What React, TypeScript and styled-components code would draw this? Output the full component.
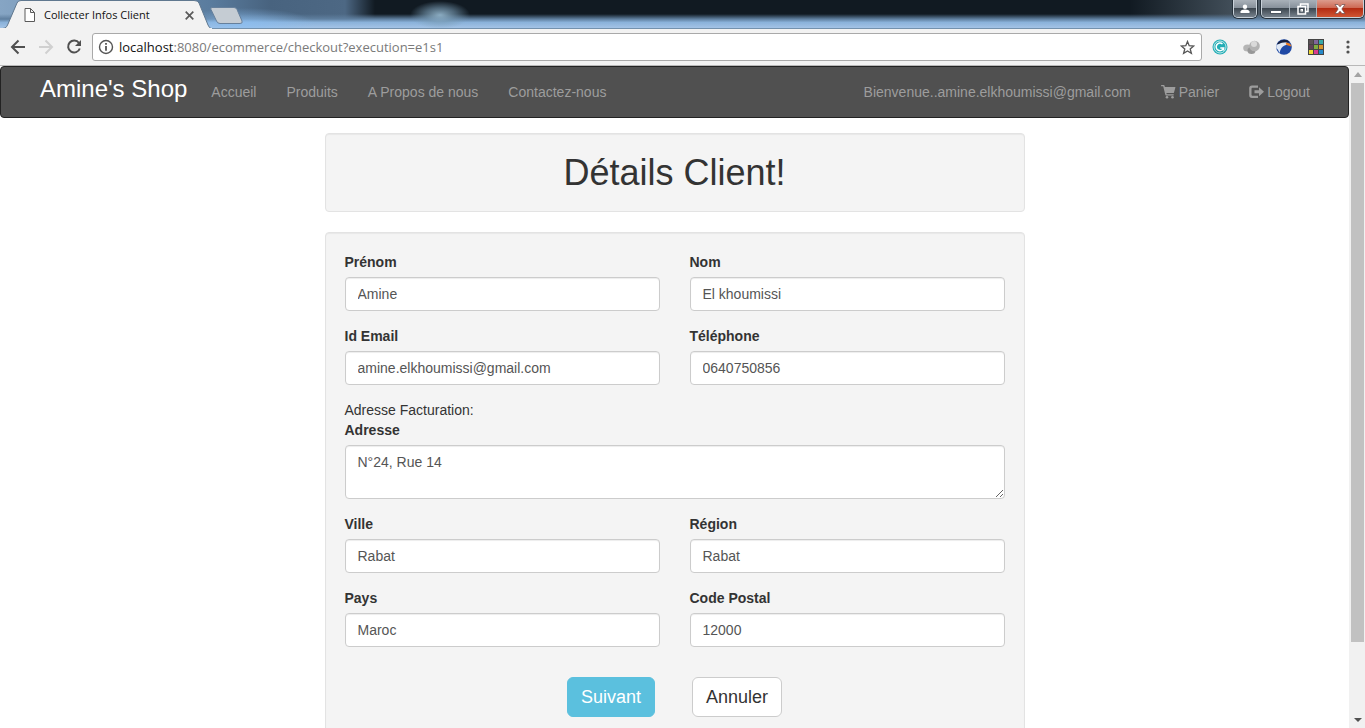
import React from 'react';
import styled, { createGlobalStyle, css } from 'styled-components';

const GlobalStyle = createGlobalStyle`
  * { box-sizing: border-box; }
  html, body { margin: 0; height: 100%; overflow: hidden; }
  body {
    font-family: 'Liberation Sans', Arial, sans-serif;
    font-size: 14px;
    line-height: 20px;
    color: #333;
    background: #fff;
  }
`;

const Window = styled.div`
  display: flex;
  flex-direction: column;
  height: 100vh;
  overflow: hidden;
`;

/* ---------- browser chrome ---------- */

const TitleBar = styled.header`
  display: flex;
  flex: none;
  align-items: flex-start;
  justify-content: space-between;
  height: 29px;
  border-bottom: 1px solid #7391ad;
  background:
    radial-gradient(ellipse 30px 14px at 440px 15px, rgba(150, 185, 208, 0.9) 0%, rgba(120, 155, 180, 0.6) 50%, transparent 100%),
    radial-gradient(ellipse 70px 16px at 245px 24px, rgba(140, 190, 240, 0.8) 0%, transparent 100%),
    linear-gradient(to bottom, transparent 50%, #5f7f9f 68%, #8ab2da 80%, #a3c3e6 100%),
    linear-gradient(to right, #86a5c4 0, #5a7c9e 210px, #48637f 270px, #4d6884 345px, #111a22 375px, #111a22 1130px, #45525d 1240px, #7d8b99 100%);
`;

const TabStrip = styled.div`
  display: flex;
  align-items: flex-start;
`;

const Tab = styled.div`
  position: relative;
  display: flex;
  align-items: center;
  width: 210px;
  height: 29px;
  padding: 1px 16px 0 24px;
  font-family: 'Open Sans', 'Noto Sans', sans-serif;
  font-size: 11px;
  color: #111;
`;

const TabShape = styled.svg`
  position: absolute;
  left: 0;
  top: 0;
`;

const TabTitle = styled.span`
  position: relative;
  flex: 1;
  margin-left: 9px;
  white-space: nowrap;
`;

const PlainButton = styled.button`
  position: relative;
  display: flex;
  align-items: center;
  justify-content: center;
  padding: 0;
  border: 0;
  background: none;
  color: #5a5a5a;
`;

const FileIcon = styled.svg`
  position: relative;
  flex: none;
`;

const NewTab = styled(PlainButton)`
  margin-top: 7px;
`;

const WindowButtons = styled.div`
  display: flex;
  gap: 4px;
  padding-right: 1px;
`;

const ButtonGroup = styled.div`
  display: flex;
  height: 18px;
  border: 1px solid #c9d2da;
  border-top: 0;
  border-radius: 0 0 5px 5px;
  overflow: hidden;
  box-shadow: 0 0 0 1px #27323c;
`;

const WindowButton = styled(PlainButton)<{ $width: number; $close?: boolean }>`
  width: ${(p) => p.$width}px;
  height: 17px;
  border-right: 1px solid #aab4bd;
  background: ${(p) =>
    p.$close
      ? 'linear-gradient(#dc9c8d 0, #ce6a55 45%, #b42c13 50%, #cf5533 100%)'
      : 'linear-gradient(#a9b1b9 0, #87919b 45%, #3d4750 50%, #77828d 100%)'};
  &:last-child { border-right: 0; }
`;

const Toolbar = styled.div`
  display: flex;
  flex: none;
  align-items: center;
  height: 37px;
  padding: 0 7px 0 8px;
  border-bottom: 1px solid #b8b8b8;
  background: #f2f2f2;
`;

const NavButtons = styled.div`
  display: flex;
  gap: 8px;
  margin-right: 8px;
`;

const ToolButton = styled(PlainButton)`
  width: 20px;
  height: 24px;
`;

const AddressBar = styled.div`
  display: flex;
  flex: 1;
  align-items: center;
  height: 28px;
  padding: 0 6px 0 5px;
  border: 1px solid #a9a9a9;
  border-radius: 3px;
  background: #fff;
`;

const Url = styled.div`
  flex: 1;
  margin-left: 5px;
  font-family: 'Open Sans', 'Noto Sans', sans-serif;
  font-size: 13px;
  color: #7a7a7a;
  b { font-weight: 400; color: #111; }
`;

const Extensions = styled.div`
  display: flex;
  gap: 12px;
  margin-left: 8px;
`;

/* ---------- page ---------- */

const Viewport = styled.div`
  display: flex;
  flex: 1;
  min-height: 0;
`;

const Page = styled.div`
  flex: 1;
  min-width: 0;
  overflow: hidden;
`;

const Scrollbar = styled.div`
  display: flex;
  flex: none;
  flex-direction: column;
  align-items: center;
  width: 16px;
  padding: 0 1px 0 2px;
  background: #f1f1f1;
`;

const ScrollArrow = styled(PlainButton)`
  width: 13px;
  height: 17px;
`;

const ScrollTrack = styled.div`
  flex: 1;
  align-self: stretch;
`;

const ScrollThumb = styled.div`
  height: 89%;
  background: #c1c1c1;
`;

const Navbar = styled.nav`
  display: flex;
  align-items: flex-start;
  justify-content: space-between;
  height: 52px;
  margin-bottom: 15px;
  padding: 0 23px 0 39px;
  border: 1px solid #222;
  border-radius: 4px;
  background: #505050;
`;

const NavGroup = styled.div`
  display: flex;
`;

const Brand = styled.a`
  padding: 12px 9px 0 0;
  font-size: 24px;
  color: #fff;
  text-decoration: none;
  white-space: nowrap;
`;

const NavLink = styled.a`
  display: flex;
  align-items: center;
  gap: 3px;
  padding: 15px;
  color: #9d9d9d;
  text-decoration: none;
  white-space: nowrap;
`;

const Column = styled.main`
  max-width: 700px;
  margin: 0 auto;
`;

const Well = styled.section`
  margin-bottom: 20px;
  padding: 19px;
  border: 1px solid #e3e3e3;
  border-radius: 4px;
  background: #f4f4f4;
  box-shadow: inset 0 1px 1px rgba(0, 0, 0, 0.05);
`;

const Heading = styled.h1`
  margin: 0;
  font-size: 36px;
  font-weight: 400;
  line-height: 39px;
  text-align: center;
`;

const FieldGrid = styled.div`
  display: grid;
  grid-template-columns: 1fr 1fr;
  gap: 15px 30px;
`;

const FieldBox = styled.div<{ $wide?: boolean }>`
  display: flex;
  flex-direction: column;
  grid-column: ${(p) => (p.$wide ? '1 / -1' : 'auto')};
`;

const Label = styled.label`
  margin-bottom: 5px;
  font-weight: 700;
`;

const control = css`
  width: 100%;
  padding: 6px 12px;
  border: 1px solid #ccc;
  border-radius: 4px;
  background: #fff;
  box-shadow: inset 0 1px 1px rgba(0, 0, 0, 0.075);
  font: inherit;
  color: #555;
`;

const Input = styled.input`
  ${control}
  height: 34px;
`;

const TextArea = styled.textarea`
  ${control}
  height: 54px;
  resize: vertical;
`;

const Actions = styled.div`
  display: flex;
  justify-content: center;
  gap: 37px;
  padding: 30px 0 15px;
`;

const ActionButton = styled.button<{ $primary?: boolean }>`
  padding: 6px 13px;
  border: 1px solid ${(p) => (p.$primary ? '#5bc0de' : '#ccc')};
  border-radius: 6px;
  background: ${(p) => (p.$primary ? '#5bc0de' : '#fff')};
  color: ${(p) => (p.$primary ? '#fff' : '#333')};
  font-family: inherit;
  font-size: 18px;
  line-height: 26px;
`;

function Field({ id, label, value }: { id: string; label: string; value: string }) {
  return (
    <FieldBox>
      <Label htmlFor={id}>{label}</Label>
      <Input id={id} name={id} defaultValue={value} />
    </FieldBox>
  );
}

function Chrome() {
  return (
    <>
      <TitleBar>
        <TabStrip>
          <Tab>
            <TabShape width="212" height="29" viewBox="0 0 212 29" aria-hidden="true">
              <path d="M0 29 L5 28 Q7 27 8 24 L17 3 Q18 .5 21 .5 H194 Q198 .5 199 3 L208 25 Q209 28 212 29 Z" fill="#f2f2f2" stroke="#60788f" />
              <path d="M0 29 H212" stroke="#f2f2f2" strokeWidth="2" />
            </TabShape>
            <FileIcon width="11" height="14" viewBox="0 0 11 14" fill="#fff" stroke="#5a5a5a" aria-hidden="true">
              <path d="M1 .5 H6.5 L10.5 4.500 V13.500 H1 Z M6.500 .5 V4.500 H10.500" />
            </FileIcon>
            <TabTitle>Collecter Infos Client</TabTitle>
            <PlainButton aria-label="Fermer l'onglet">
              <svg width="9" height="9" viewBox="0 0 9 9" stroke="#5a5a5a" strokeWidth="1.7"><path d="M.7 .7 L8.300 8.300 M8.300 .7 L.7 8.300" /></svg>
            </PlainButton>
          </Tab>
          <NewTab aria-label="Nouvel onglet">
            <svg width="33" height="18" viewBox="0 0 33 18"><path d="M2 .5 H24 Q26 .5 27 2.500 L32 14 Q33 16.500 30 16.500 H10 Q7.500 16.500 6.500 14 L1 2.500 Q0 .5 2 .5 Z" fill="#c5ccd3" stroke="#66809c" /></svg>
          </NewTab>
        </TabStrip>
        <WindowButtons>
          <ButtonGroup>
            <WindowButton $width={22} aria-label="Profil">
              <svg width="10" height="10" viewBox="0 0 10 10" fill="#fff"><circle cx="5" cy="2.700" r="2.200" /><path d="M.5 9 V7.500 Q1 5.500 5 5.500 T9.500 7.500 V9 Z" /></svg>
            </WindowButton>
          </ButtonGroup>
          <ButtonGroup>
            <WindowButton $width={28} aria-label="Réduire">
              <svg width="12" height="12" viewBox="0 0 12 12"><rect x=".5" y="7.500" width="11" height="3" fill="#fff" stroke="#4b5560" /></svg>
            </WindowButton>
            <WindowButton $width={27} aria-label="Restaurer">
              <svg width="12" height="12" viewBox="0 0 12 12" fill="none" stroke="#fff" strokeWidth="1.500"><path d="M3.500 3 V1 H11 V8.500 H9" /><rect x="1" y="3.500" width="7.500" height="7.500" /><rect x="4" y="6.500" width="1.500" height="1.500" strokeWidth="1" /></svg>
            </WindowButton>
            <WindowButton $width={46} $close aria-label="Fermer">
              <svg width="12" height="10" viewBox="0 0 12 10"><path d="M1 .5 H4 L6 2.800 L8 .5 H11 L7.800 5 L11 9.500 H8 L6 7.200 L4 9.500 H1 L4.200 5 Z" fill="#fff" stroke="#6b4a4a" strokeWidth=".7" /></svg>
            </WindowButton>
          </ButtonGroup>
        </WindowButtons>
      </TitleBar>
      <Toolbar>
        <NavButtons>
          <ToolButton aria-label="Précédent">
            <svg width="16" height="16" viewBox="0 0 16 16" fill="none" stroke="#505050" strokeWidth="2"><path d="M15 8 H2.500 M8.500 1.500 L2 8 L8.500 14.500" /></svg>
          </ToolButton>
          <ToolButton aria-label="Page suivante" disabled>
            <svg width="16" height="16" viewBox="0 0 16 16" fill="none" stroke="#d0d0d0" strokeWidth="2"><path d="M1 8 H13.500 M7.500 1.500 L14 8 L7.500 14.500" /></svg>
          </ToolButton>
          <ToolButton aria-label="Actualiser">
            <svg width="16" height="16" viewBox="0 0 16 16"><path d="M13 4 A6 6 0 1 0 13.800 9.500" fill="none" stroke="#505050" strokeWidth="2" /><path d="M15 1 V7 H9 Z" fill="#505050" /></svg>
          </ToolButton>
        </NavButtons>
        <AddressBar>
          <svg width="16" height="16" viewBox="0 0 16 16" fill="none" stroke="#555" aria-hidden="true"><circle cx="8" cy="8" r="6.500" strokeWidth="1.400" /><path d="M8 7 V11.800 M8 4 V5.800" strokeWidth="1.800" /></svg>
          <Url role="textbox" aria-label="Adresse de la page"><b>localhost</b>:8080/ecommerce/checkout?execution=e1s1</Url>
          <PlainButton aria-label="Ajouter aux favoris">
            <svg width="15" height="15" viewBox="0 0 15 15" fill="none" stroke="#555" strokeWidth="1.300"><path d="M7.500 1.500 L9.200 5.700 L13.700 6 L10.200 8.900 L11.400 13.300 L7.500 10.900 L3.600 13.300 L4.800 8.900 L1.300 6 L5.800 5.700 Z" /></svg>
          </PlainButton>
        </AddressBar>
        <Extensions>
          <ToolButton aria-label="Grammarly">
            <svg width="16" height="16" viewBox="0 0 16 16" fill="none"><circle cx="8" cy="8" r="7.500" fill="#22adb5" /><circle cx="8" cy="8" r="6" stroke="#fff" strokeWidth=".7" /><path d="M10.500 5 A3.800 3.800 0 1 0 11.600 9 H8.300 M11.600 8.300 V11.500" stroke="#fff" strokeWidth="1.500" /></svg>
          </ToolButton>
          <ToolButton aria-label="Extension inactive">
            <svg width="18" height="16" viewBox="0 0 18 16"><ellipse cx="4.500" cy="9" rx="4.300" ry="3.500" fill="#b5b5b5" /><ellipse cx="8.500" cy="11.500" rx="4" ry="3.500" fill="#979797" /><circle cx="11.500" cy="7" r="5.300" fill="#b3b3b3" /><circle cx="11" cy="5" r="3" fill="#dadada" /></svg>
          </ToolButton>
          <ToolButton aria-label="Extension Eagle">
            <svg width="16" height="16" viewBox="0 0 16 16"><circle cx="8" cy="8" r="7.800" fill="#1f49a5" /><path d="M.3 6.500 Q5 2 10 3 L13 5.500 Q8 5.500 5.500 9 Q4 11 3.500 14 Q2 10 .3 9 Z" fill="#dfe8f6" /><path d="M9.500 3.500 Q14.500 3.500 15.500 7.500 L10.500 6 Z" fill="#ed7c20" /><path d="M1.500 4 Q6 -1 12 1.500 L13.500 3.500 Q7 2.500 1.500 5.500 Z" fill="#17213f" /></svg>
          </ToolButton>
          <ToolButton aria-label="Palette">
            <svg width="16" height="16" viewBox="0 0 16 16"><path d="M0 0 H16 V16 H0 Z" fill="#444" /><path d="M1 1h4v4h-4z" fill="#5c5256" /><path d="M6 1h4v4h-4z" fill="#80669a" /><path d="M11 1h4v4h-4z" fill="#37a9a8" /><path d="M1 6h4v4h-4z" fill="#604257" /><path d="M6 6h4v4h-4z" fill="#7fac40" /><path d="M11 6h4v4h-4z" fill="#d8962c" /><path d="M1 11h4v4h-4z" fill="#ecd633" /><path d="M6 11h4v4h-4z" fill="#d93d8e" /><path d="M11 11h4v4h-4z" fill="#2689c9" /></svg>
          </ToolButton>
          <ToolButton aria-label="Menu">
            <svg width="4" height="14" viewBox="0 0 4 14" fill="#505050"><circle cx="2" cy="2" r="1.600" /><circle cx="2" cy="7" r="1.600" /><circle cx="2" cy="12" r="1.600" /></svg>
          </ToolButton>
        </Extensions>
      </Toolbar>
    </>
  );
}

export default function App() {
  return (
    <Window>
      <GlobalStyle />
      <Chrome />
      <Viewport>
        <Page>
          <Navbar>
            <NavGroup>
              <Brand href="#">Amine's Shop</Brand>
              <NavLink href="#">Accueil</NavLink>
              <NavLink href="#">Produits</NavLink>
              <NavLink href="#">A Propos de nous</NavLink>
              <NavLink href="#">Contactez-nous</NavLink>
            </NavGroup>
            <NavGroup>
              <NavLink href="#">Bienvenue..amine.elkhoumissi@gmail.com</NavLink>
              <NavLink href="#">
                <svg width="15" height="14" viewBox="0 0 15 14" fill="#9d9d9d" aria-hidden="true"><path d="M.5 0 H2.800 Q3.300 0 3.500 .6 L3.900 2 H14 Q14.600 2 14.400 2.600 L13 7.400 Q12.800 8 12.200 8 H5.400 L5.700 9.200 H12.300 Q12.900 9.200 12.900 9.800 T12.300 10.400 H5 Q4.500 10.400 4.300 9.800 L2.200 1.300 H.5 Q0 1.300 0 .65 T.5 0 Z" /><circle cx="6" cy="12.300" r="1.300" /><circle cx="11.500" cy="12.300" r="1.300" /></svg>
                Panier
              </NavLink>
              <NavLink href="#">
                <svg width="15" height="14" viewBox="0 0 15 14" fill="#9d9d9d" aria-hidden="true"><path d="M9 .5 V2.700 H3.500 Q2.500 2.700 2.500 3.700 V9.800 Q2.500 10.800 3.500 10.800 H9 V13 H3 Q.2 13 .2 10.300 V3.200 Q.2 .5 3 .5 Z" /><path d="M10 2.300 L15 6.800 L10 11.300 V8.300 H5.500 V5.300 H10 Z" /></svg>
                Logout
              </NavLink>
            </NavGroup>
          </Navbar>
          <Column>
            <Well>
              <Heading>Détails Client!</Heading>
            </Well>
            <Well as="form">
              <FieldGrid>
                <Field id="prenom" label="Prénom" value="Amine" />
                <Field id="nom" label="Nom" value="El khoumissi" />
                <Field id="email" label="Id Email" value="amine.elkhoumissi@gmail.com" />
                <Field id="telephone" label="Téléphone" value="0640750856" />
                <FieldBox $wide>
                  <span>Adresse Facturation:</span>
                  <Label htmlFor="adresse">Adresse</Label>
                  <TextArea id="adresse" name="adresse" defaultValue="N°24, Rue 14" />
                </FieldBox>
                <Field id="ville" label="Ville" value="Rabat" />
                <Field id="region" label="Région" value="Rabat" />
                <Field id="pays" label="Pays" value="Maroc" />
                <Field id="code-postal" label="Code Postal" value="12000" />
              </FieldGrid>
              <Actions>
                <ActionButton type="button" $primary>Suivant</ActionButton>
                <ActionButton type="button">Annuler</ActionButton>
              </Actions>
            </Well>
          </Column>
        </Page>
        <Scrollbar aria-hidden="true">
          <ScrollArrow tabIndex={-1}>
            <svg width="8" height="5" viewBox="0 0 8 5"><path d="M0 5 L4 0 L8 5 Z" fill="#a3a3a3" /></svg>
          </ScrollArrow>
          <ScrollTrack>
            <ScrollThumb />
          </ScrollTrack>
          <ScrollArrow tabIndex={-1}>
            <svg width="8" height="4" viewBox="0 0 8 4"><path d="M0 0 L4 4 L8 0 Z" fill="#505050" /></svg>
          </ScrollArrow>
        </Scrollbar>
      </Viewport>
    </Window>
  );
}
